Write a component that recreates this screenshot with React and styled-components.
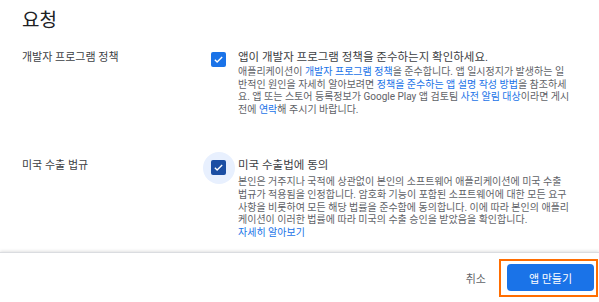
import React from "react";
import styled, { createGlobalStyle } from "styled-components";

const GlobalStyle = createGlobalStyle`
  html, body {
    margin: 0;
    padding: 0;
    background: #fff;
  }
  body {
    font-family: Roboto, "Noto Sans CJK KR", sans-serif;
    color: #202124;
  }
`;

const Page = styled.div`
  width: 599px;
  height: 302px;
  display: flex;
  flex-direction: column;
  overflow: hidden;
`;

const Content = styled.div`
  flex: 1;
  padding: 9px 0 0 22px;
`;

const Heading = styled.h1`
  margin: 0 0 16px;
  font-size: 19px;
  line-height: 24px;
  font-weight: 400;
  color: #202124;
`;

const Row = styled.div`
  display: grid;
  grid-template-columns: 177px 15px auto;
  column-gap: 12px;
  margin-top: ${(p) => p.$gap || 0}px;
`;

const Label = styled.div`
  font-size: 11px;
  line-height: 16px;
  padding-top: 1px;
  color: #3c4043;
`;

const CheckWrap = styled.div`
  position: relative;
  width: 15px;
  height: 15px;
  margin-top: 3px;
`;

const Halo = styled.span`
  position: absolute;
  left: 50%;
  top: 50%;
  width: 32px;
  height: 32px;
  margin: -16px 0 0 -16px;
  border-radius: 50%;
  background: #e8f0fe;
`;

const Box = styled.span`
  position: relative;
  display: flex;
  align-items: center;
  justify-content: center;
  width: 15px;
  height: 15px;
  border-radius: 2px;
  background: ${(p) => (p.$focused ? "#1b4ea3" : "#1a73e8")};
`;

const Body = styled.div`
  display: flex;
  flex-direction: column;
`;

const ItemTitle = styled.div`
  font-size: 11.5px;
  line-height: 16px;
  color: #3c4043;
  white-space: nowrap;
`;

const Desc = styled.div`
  margin-top: ${(p) => p.$gap || 2}px;
  font-size: 10px;
  line-height: 12.6px;
  color: #5f6368;
  white-space: nowrap;
`;

const Link = styled.a`
  color: #1a73e8;
  text-decoration: none;
`;

const Footer = styled.div`
  height: 50px;
  display: flex;
  align-items: center;
  justify-content: flex-end;
  gap: 13px;
  padding: 1px 1px 0 0;
  border-top: 1px solid #dadce0;
  box-shadow: 0 -1px 3px rgba(0, 0, 0, 0.12);
  box-sizing: border-box;
`;

const TextButton = styled.button`
  border: none;
  background: none;
  padding: 0;
  font-family: inherit;
  font-size: 11px;
  color: #5f6368;
`;

const Highlight = styled.div`
  border: 2px solid #ff6d00;
  padding: 3px 2px 4px 6px;
`;

const PrimaryButton = styled.button`
  width: 87px;
  height: 27px;
  border: none;
  border-radius: 4px;
  background: #1a73e8;
  color: #fff;
  font-family: inherit;
  font-size: 11px;
  display: block;
`;

const Check = ({ focused }) => (
  <CheckWrap>
    {focused && <Halo />}
    <Box $focused={focused}>
      <svg width="11" height="11" viewBox="0 0 24 24">
        <path
          d="M4 12.5l5 5L20 6.5"
          fill="none"
          stroke="#fff"
          strokeWidth="3"
        />
      </svg>
    </Box>
  </CheckWrap>
);

export default function App() {
  return (
    <Page>
      <GlobalStyle />
      <Content>
        <Heading>요청</Heading>

        <Row>
          <Label>개발자 프로그램 정책</Label>
          <Check />
          <Body>
            <ItemTitle>앱이 개발자 프로그램 정책을 준수하는지 확인하세요.</ItemTitle>
            <Desc $gap={1}>
              애플리케이션이 <Link>개발자 프로그램 정책</Link>을 준수합니다. 앱 일시정지가 발생하는 일
              <br />
              반적인 원인을 자세히 알아보려면 <Link>정책을 준수하는 앱 설명 작성 방법</Link>을 참조하세
              <br />
              요. 앱 또는 스토어 등록정보가 Google Play 앱 검토팀 <Link>사전 알림 대상</Link>이라면 게시
              <br />
              전에 <Link>연락</Link>해 주시기 바랍니다.
            </Desc>
          </Body>
        </Row>

        <Row $gap={41}>
          <Label>미국 수출 법규</Label>
          <Check focused />
          <Body>
            <ItemTitle>미국 수출법에 동의</ItemTitle>
            <Desc $gap={3}>
              본인은 거주지나 국적에 상관없이 본인의 소프트웨어 애플리케이션에 미국 수출
              <br />
              법규가 적용됨을 인정합니다. 암호화 기능이 포함된 소프트웨어에 대한 모든 요구
              <br />
              사항을 비롯하여 모든 해당 법률을 준수함에 동의합니다. 이에 따라 본인의 애플리
              <br />
              케이션이 이러한 법률에 따라 미국의 수출 승인을 받았음을 확인합니다.
              <br />
              <Link>자세히 알아보기</Link>
            </Desc>
          </Body>
        </Row>
      </Content>

      <Footer>
        <TextButton>취소</TextButton>
        <Highlight>
          <PrimaryButton>앱 만들기</PrimaryButton>
        </Highlight>
      </Footer>
    </Page>
  );
}
